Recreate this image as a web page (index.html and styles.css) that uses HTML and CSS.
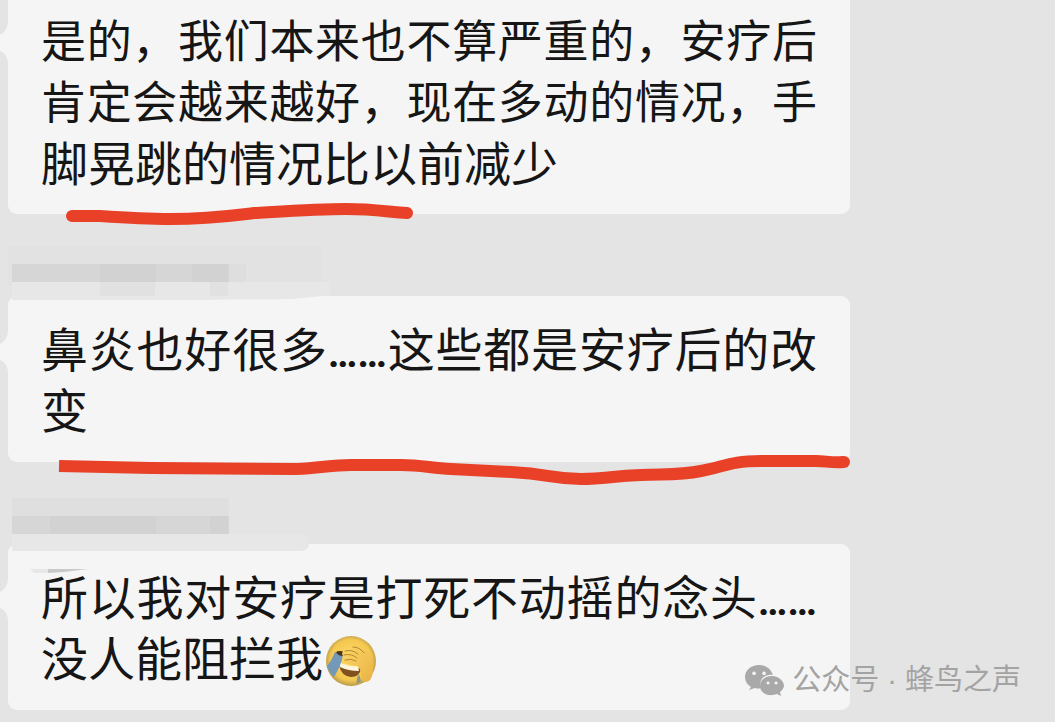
FILE: index.html
```html
<!DOCTYPE html>
<html lang="zh-CN">
<head>
<meta charset="utf-8">
<meta name="viewport" content="width=device-width, initial-scale=1">
<title>聊天记录</title>
<link rel="stylesheet" href="styles.css">
</head>
<body>
<main class="chat">
  <article class="message message-first">
    <div class="bubble">
      <svg class="tail" viewBox="0 0 8 40" aria-hidden="true"><path d="M8 0Q7 8 0 12V28Q7 30 8 40Z"/></svg>
      <p class="text">
        <span class="line full dense">是的，我们本来也不算严重的，安疗后</span>
        <span class="line full dense">肯定会越来越好，现在多动的情况，手</span>
        <span class="line">脚晃跳的情况比以前减少</span>
      </p>
      <svg class="stroke stroke-short" viewBox="0 0 350 26" aria-hidden="true"><path d="M8 14H36C65 16 80 17 106 17C145 17 165 14 190 11C225 9 255 7 282 7C310 7 325 10 343 11"/></svg>
    </div>
  </article>

  <article class="message">
    <svg class="mosaic" viewBox="0 0 330 82" aria-hidden="true">
      <path class="tone-a" d="M8 32H322V72H8Z"/>
      <path class="tone-c" d="M12 50H229V68H12Z"/>
      <path class="tone-d" d="M229 50H246V68H229Z"/>
      <path class="tone-e" d="M100 50H156V68H100ZM192 50H228V68H192Z"/>
      <path class="tone-f" d="M12 68H330V82H12Z"/>
      <path class="tone-g" d="M100 68H155V82H100ZM210 68H228V82H210Z"/>
    </svg>
    <div class="bubble">
      <svg class="tail" viewBox="0 0 8 40" aria-hidden="true"><path d="M8 0Q7 8 0 12V28Q7 30 8 40Z"/></svg>
      <svg class="smear" viewBox="0 0 310 8" aria-hidden="true"><path d="M0 0H310L280 3L180 4H0Z"/></svg>
      <p class="text">
        <span class="line full">鼻炎也好很多<span class="dots">……</span>这些都是安疗后的改</span>
        <span class="line">变</span>
      </p>
      <svg class="stroke stroke-long" viewBox="0 0 800 40" aria-hidden="true"><path class="butt" d="M8 16L100 18L245 19C270 18 280 15 300 15H350C370 15 380 18 400 19L460 22C500 24 500 29 530 29C555 29 560 26 590 25C620 24 630 25 650 21C675 16 680 11 710 11H765C775 11 780 13 793 12"/><path d="M792 12H793"/></svg>
    </div>
  </article>

  <article class="message">
    <svg class="mosaic" viewBox="0 0 330 82" aria-hidden="true">
      <path class="tone-b" d="M12 36H229V54H12Z"/>
      <path class="tone-c" d="M12 54H229V72H12Z"/>
      <path class="tone-e" d="M50 54H156V72H50ZM210 54H228V72H210Z"/>
      <path class="tone-f" d="M12 72H304Q309 74 309 82H12Z"/>
    </svg>
    <div class="bubble">
      <svg class="tail" viewBox="0 0 8 40" aria-hidden="true"><path d="M8 0Q7 8 0 12V28Q7 30 8 40Z"/></svg>
      <svg class="smear smear-tall" viewBox="0 0 310 30" aria-hidden="true"><path d="M0 0H297Q297 7 288 7H0Z"/><path d="M18 25H36V29H22Z"/><path class="shade" d="M36 25H76L52 28L36 29Z"/></svg>
      <p class="text">
        <span class="line full">所以我对安疗是打死不动摇的念头<span class="dots">……</span></span>
        <span class="line">没人能阻拦我<svg class="emoji" viewBox="0 0 52 52" role="img" aria-label="捂脸">
          <defs>
            <radialGradient id="face" cx="50%" cy="48%" r="52%"><stop offset="0" stop-color="#ffdc68"/><stop offset=".78" stop-color="#f4c850"/><stop offset="1" stop-color="#b99a4c"/></radialGradient>
            <linearGradient id="hand" x1="0" y1="0" x2="1" y2="1"><stop offset="0" stop-color="#fbd766"/><stop offset="1" stop-color="#e9b245"/></linearGradient>
          </defs>
          <circle cx="26" cy="26" r="25" fill="url(#face)"/>
          <path d="M14 30Q24 36 36 33Q35 42 26 42Q16 41 14 30Z" fill="#80521d"/>
          <path d="M14 27Q23 32 33 31L34 36Q23 36 15 32Z" fill="#fff5df"/>
          <path d="M10 17L18 20Q16 31 9 42Q4 38 2 31Q7 25 10 17Z" fill="#7398b8"/>
          <path d="M34 39L36 46L32 49Q31 44 34 39Z" fill="#8b9788"/>
          <path d="M11 17Q14 15 20 17L18 21Q13 21 11 17Z" fill="#47351e"/>
          <path d="M18 21C16 18 18 15 22 14Q25 11 29 12Q34 10 38 14Q43 15 45 20Q49 24 48 33Q48 43 44 46Q38 49 36 42Q37 34 32 31C27 30 21 29 18 26Q16 23 20 22Z" fill="url(#hand)"/>
          <path d="M20 16Q27 14 33 19M19 20Q26 18 32 23M20 25Q26 23 31 26M28 12Q35 12 39 18" fill="none" stroke="#b78430" stroke-width="1" stroke-linecap="round"/>
        </svg></span>
      </p>
    </div>
  </article>

  <footer class="watermark">
    <svg class="wechat" viewBox="0 0 39 33" aria-hidden="true">
      <path fill-rule="evenodd" d="M14 1C6 1 0 6 0 13Q0 19 6 23L4 26L10 24Q13 25 16 24C13 15 20 10 28 11C26 5 21 1 14 1ZM9 7.500a1.800 1.800 0 1 0 .1 0ZM19 7.500a1.800 1.800 0 1 0 .1 0Z"/>
      <path fill-rule="evenodd" d="M27 12C20 12 15 16 15 22C15 28 21 32 28 31L32 30L36 32L35 28Q39 25 39 21C38 16 33 12 27 12ZM23 17.500a1.500 1.500 0 1 0 .1 0ZM31 17.500a1.500 1.500 0 1 0 .1 0Z"/>
    </svg>
    <span class="account">公众号 · 蜂鸟之声</span>
  </footer>
</main>
</body>
</html>
```

FILE: styles.css
```css
* { box-sizing: border-box; }

body {
  margin: 0;
  background: #e4e4e4;
  color: #161616;
  font-family: "Noto Sans CJK SC", sans-serif;
}

.chat {
  position: relative;
  padding-bottom: 12px;
  overflow: hidden;
}

.message { padding: 0 205px 0 8px; }

.mosaic {
  display: block;
  width: 330px;
  height: 82px;
  margin-left: -8px;
}

.tone-a { fill: #e2e2e2; }
.tone-b { fill: #dfdfdf; }
.tone-c { fill: #d6d6d6; }
.tone-d { fill: #dedede; }
.tone-e { fill: #d2d2d2; }
.tone-f { fill: #e7e7e7; }
.tone-g { fill: #e1e1e1; }

.bubble {
  position: relative;
  padding: 20px 33px 24px 33px;
  border-radius: 9px;
  background: #f5f5f5;
}

.message-first .bubble {
  padding-top: 8px;
  padding-bottom: 23px;
  border-radius: 0 0 9px 9px;
}

.tail {
  position: absolute;
  top: 36px;
  left: -8px;
  width: 8px;
  height: 40px;
  fill: #f5f5f5;
}

.message-first .tail { top: 23px; }

.smear {
  position: absolute;
  top: 0;
  left: 4px;
  width: 310px;
  height: 8px;
  fill: #e7e7e7;
}

.smear-tall { height: 30px; }
.shade { fill: #c9c9c9; }

.text {
  margin: 0;
  font-size: 47px;
  line-height: 61px;
}

.line {
  display: block;
  height: 61px;
  white-space: nowrap;
}

.full { text-align-last: justify; }
.dense { font-size: 45px; }

.dots {
  display: inline-block;
  font-family: Roboto, sans-serif;
  font-size: 40px;
  font-weight: 700;
}

.emoji {
  width: 52px;
  height: 52px;
  margin-left: 2px;
  vertical-align: -11px;
}

.stroke {
  position: absolute;
  z-index: 1;
  fill: none;
  stroke: #e94128;
  stroke-width: 12px;
  stroke-linecap: round;
  stroke-linejoin: round;
}

.stroke-short {
  top: 202px;
  left: 56px;
  width: 350px;
  height: 26px;
}

.stroke-long {
  top: 154px;
  left: 43px;
  width: 800px;
  height: 40px;
}

.stroke .butt { stroke-linecap: butt; }

.watermark {
  position: absolute;
  right: 34px;
  bottom: 20px;
  display: flex;
  align-items: center;
  gap: 8px;
  color: #a3a3a3;
  font-size: 29px;
  line-height: 44px;
}

.account { font-family: "Liberation Sans", "Noto Sans CJK SC", sans-serif; }

.wechat {
  width: 39px;
  height: 33px;
  fill: #a9a9a9;
}
```
